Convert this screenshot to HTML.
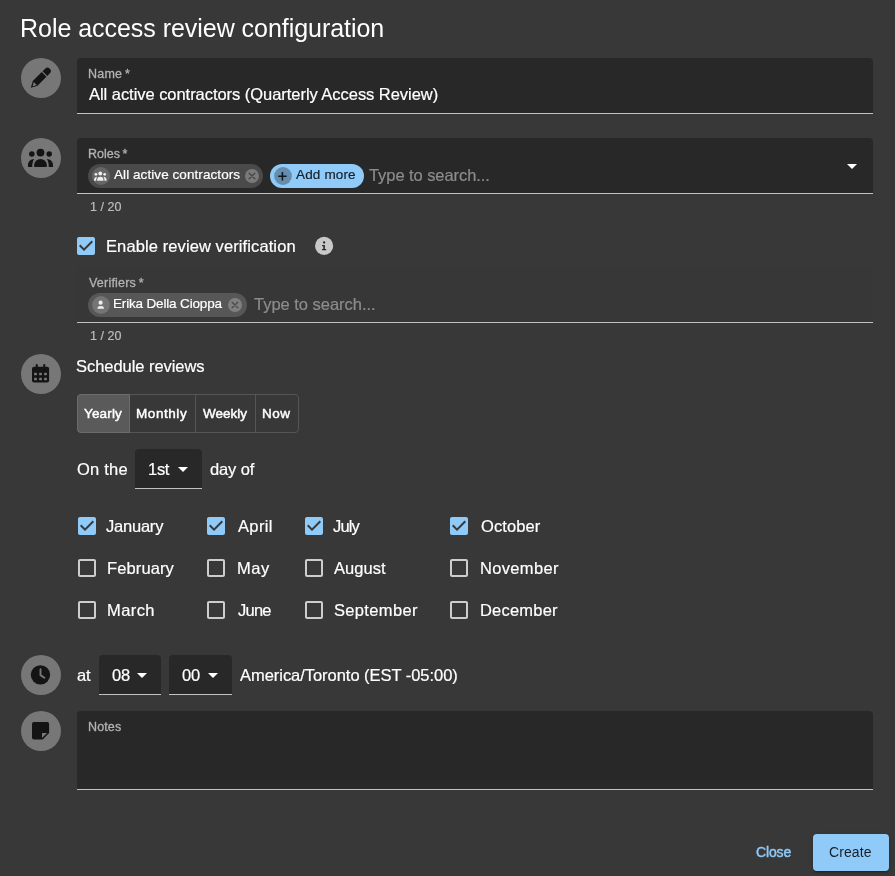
<!DOCTYPE html>
<html><head><meta charset="utf-8">
<title>Role access review configuration</title>
<style>
*{box-sizing:border-box;margin:0;padding:0}
html,body{width:895px;height:876px;overflow:hidden;background:#383838;font-family:"Liberation Sans",sans-serif;color:#fff}
.a{position:absolute}
svg.a{overflow:visible}
.t{position:absolute;white-space:nowrap;line-height:0;height:0;will-change:transform}
.circ{position:absolute;left:21px;width:40px;height:40px;border-radius:50%;background:#777}
.fld{position:absolute;left:77px;width:796px;background:#282828;border-radius:4px 4px 0 0;border-bottom:1px solid #c2c2c2}
</style></head><body>

<!-- name -->
<div class="circ" style="top:58px"></div>
<svg class="a" style="left:21px;top:58px" width="40" height="40" viewBox="21 58 40 40">
  <g transform="translate(30.8 87.7) rotate(-45)" fill="#141414">
    <path d="M0 0L6.1 -3.3H18.8V3.3H6.1Z"/>
    <path d="M20 -3.3H23.6A3.3 3.3 0 0 1 23.6 3.3H20Z"/>
  </g>
  <g transform="translate(30.8 87.7) rotate(-45)" fill="#777">
    <path d="M2.3 0.2L6.1 -2.1V2.4Z"/>
  </g>
</svg>
<div class="fld" style="top:58px;height:56px"></div>

<!-- roles -->
<div class="circ" style="top:138px"></div>
<svg class="a" style="left:21px;top:138px" width="40" height="40" viewBox="21 138 40 40" fill="#141414"><circle cx="40.5" cy="152.6" r="3.9"/>
      <circle cx="31.8" cy="154.1" r="2.75"/>
      <circle cx="49.2" cy="154.1" r="2.75"/>
      <path d="M34.2 167V165.2A6.3 6.3 0 0 1 46.8 165.2V167Z"/>
      <path d="M34.2 159.1C30.6 159.3 28 161.8 28 165.2V167H32.2C32.2 163.6 32.8 161 34.2 159.1Z"/>
      <path d="M46.8 159.1C50.4 159.3 53 161.8 53 165.2V167H48.8C48.8 163.6 48.2 161 46.8 159.1Z"/></svg>
<div class="fld" style="top:138px;height:56px"></div>
<div class="a" style="left:88px;top:164px;width:175px;height:24px;border-radius:12px;background:#4a4a4a"></div>
<div class="a" style="left:92px;top:167px;width:18px;height:18px;border-radius:50%;background:#666"></div>
<svg class="a" style="left:92px;top:167px" width="18" height="18" viewBox="92 167 18 18" fill="#eee"><g transform="translate(100.3 176.1) scale(0.5) translate(-40.5 -157.8)"><circle cx="40.5" cy="152.6" r="3.9"/>
      <circle cx="31.8" cy="154.1" r="2.75"/>
      <circle cx="49.2" cy="154.1" r="2.75"/>
      <path d="M34.2 167V165.2A6.3 6.3 0 0 1 46.8 165.2V167Z"/>
      <path d="M34.2 159.1C30.6 159.3 28 161.8 28 165.2V167H32.2C32.2 163.6 32.8 161 34.2 159.1Z"/>
      <path d="M46.8 159.1C50.4 159.3 53 161.8 53 165.2V167H48.8C48.8 163.6 48.2 161 46.8 159.1Z"/></g></svg>
<svg class="a" style="left:245px;top:169px" width="14" height="14" viewBox="245 169 14 14">
  <circle cx="252" cy="176" r="7" fill="#7a7a7a"/>
  <path d="M249.1 173.3L254.8 178.7M254.8 173.3L249.1 178.7" stroke="#444" stroke-width="1.3" stroke-linecap="round"/>
</svg>
<div class="a" style="left:270px;top:164px;width:94px;height:24px;border-radius:12px;background:#90caf9"></div>
<svg class="a" style="left:274px;top:167px" width="18" height="18" viewBox="274 167 18 18">
  <circle cx="283" cy="176" r="8.9" fill="#668cae"/>
  <path d="M278.2 176.2H286.6M282.4 172V180.4" stroke="#101a24" stroke-width="1.6"/>
</svg>
<svg class="a" style="left:840px;top:154px" width="24" height="24" viewBox="0 0 24 24" fill="#fff"><path d="M7 10l5 5 5-5z"/></svg>

<!-- verify -->
<svg class="a" style="left:74px;top:234px" width="24" height="24" viewBox="0 0 24 24" fill="#90caf9"><path d="M19 3H5c-1.11 0-2 .9-2 2v14c0 1.1.89 2 2 2h14c1.11 0 2-.9 2-2V5c0-1.1-.89-2-2-2zm-9 14l-5-5 1.41-1.41L10 14.17l7.59-7.59L19 8l-9 9z"/></svg>
<svg class="a" style="left:315px;top:237px" width="18" height="18" viewBox="315 237 18 18">
  <circle cx="324.1" cy="245.9" r="9.1" fill="#c8c8c8"/>
  <circle cx="324.1" cy="242.5" r="1.15" fill="#2a2a2a"/>
  <path d="M322.1 245.1H324.9V249H326.2V250.2H322V249H323.3V246.2H322.1Z" fill="#2a2a2a"/>
</svg>
<div class="a" style="left:77px;top:267px;width:796px;height:56px;border-bottom:1px solid #c2c2c2;background:#373737;border-radius:4px 4px 0 0"></div>
<div class="a" style="left:88px;top:293px;width:159px;height:24px;border-radius:12px;background:#575757"></div>
<svg class="a" style="left:92px;top:296px" width="18" height="18" viewBox="92 296 18 18">
  <circle cx="101" cy="305" r="8.9" fill="#747474"/>
  <circle cx="100.6" cy="302.7" r="2.1" fill="#eee"/>
  <path d="M97.5 308.8V308.3A3.2 2.4 0 0 1 103.9 308.3V308.8Z" fill="#eee"/>
</svg>
<svg class="a" style="left:228px;top:298px" width="14" height="14" viewBox="228 298 14 14">
  <circle cx="235" cy="305" r="7" fill="#808080"/>
  <path d="M232.1 302.3L237.8 307.7M237.8 302.3L232.1 307.7" stroke="#4a4a4a" stroke-width="1.3" stroke-linecap="round"/>
</svg>

<!-- schedule -->
<div class="circ" style="top:354px"></div>
<svg class="a" style="left:21px;top:354px" width="40" height="40" viewBox="21 354 40 40" fill="#141414">
  <rect x="32" y="366.8" width="17.1" height="15.8" rx="2"/>
  <rect x="35.7" y="363.9" width="2.1" height="5" rx="1"/>
  <rect x="43.2" y="363.9" width="2.1" height="5" rx="1"/>
  <g fill="#777">
    <rect x="34.1" y="372.8" width="2.8" height="2.4" rx=".4"/>
    <rect x="39.1" y="372.8" width="2.8" height="2.4" rx=".4"/>
    <rect x="44.1" y="372.8" width="2.8" height="2.4" rx=".4"/>
    <rect x="34.1" y="377.8" width="2.8" height="2.4" rx=".4"/>
    <rect x="39.1" y="377.8" width="2.8" height="2.4" rx=".4"/>
    <rect x="44.1" y="377.8" width="2.8" height="2.4" rx=".4"/>
  </g>
</svg>
<div class="a" style="left:77px;top:394px;width:222px;height:39px;border:1px solid #555;border-radius:4px"></div>
<div class="a" style="left:195px;top:395px;width:1px;height:37px;background:#555"></div>
<div class="a" style="left:255px;top:395px;width:1px;height:37px;background:#555"></div>
<div class="a" style="left:77px;top:394px;width:53px;height:39px;border:1px solid #6c6c6c;border-radius:4px 0 0 4px;background:#5a5a5a"></div>

<div class="fld" style="left:135px;top:449px;width:67px;height:40px"></div>
<svg class="a" style="left:171px;top:457px" width="24" height="24" viewBox="0 0 24 24" fill="#fff"><path d="M7 10l5 5 5-5z"/></svg>

<!-- months -->
<svg class="a" style="left:75px;top:514px" width="24" height="24" viewBox="0 0 24 24" fill="#90caf9"><path d="M19 3H5c-1.11 0-2 .9-2 2v14c0 1.1.89 2 2 2h14c1.11 0 2-.9 2-2V5c0-1.1-.89-2-2-2zm-9 14l-5-5 1.41-1.41L10 14.17l7.59-7.59L19 8l-9 9z"/></svg>
<svg class="a" style="left:204px;top:514px" width="24" height="24" viewBox="0 0 24 24" fill="#90caf9"><path d="M19 3H5c-1.11 0-2 .9-2 2v14c0 1.1.89 2 2 2h14c1.11 0 2-.9 2-2V5c0-1.1-.89-2-2-2zm-9 14l-5-5 1.41-1.41L10 14.17l7.59-7.59L19 8l-9 9z"/></svg>
<svg class="a" style="left:302px;top:514px" width="24" height="24" viewBox="0 0 24 24" fill="#90caf9"><path d="M19 3H5c-1.11 0-2 .9-2 2v14c0 1.1.89 2 2 2h14c1.11 0 2-.9 2-2V5c0-1.1-.89-2-2-2zm-9 14l-5-5 1.41-1.41L10 14.17l7.59-7.59L19 8l-9 9z"/></svg>
<svg class="a" style="left:447px;top:514px" width="24" height="24" viewBox="0 0 24 24" fill="#90caf9"><path d="M19 3H5c-1.11 0-2 .9-2 2v14c0 1.1.89 2 2 2h14c1.11 0 2-.9 2-2V5c0-1.1-.89-2-2-2zm-9 14l-5-5 1.41-1.41L10 14.17l7.59-7.59L19 8l-9 9z"/></svg>

<svg class="a" style="left:75px;top:556px" width="24" height="24" viewBox="0 0 24 24" fill="#cdcdcd"><path d="M19 5v14H5V5h14m0-2H5c-1.1 0-2 .9-2 2v14c0 1.1.9 2 2 2h14c1.1 0 2-.9 2-2V5c0-1.1-.9-2-2-2z"/></svg>
<svg class="a" style="left:204px;top:556px" width="24" height="24" viewBox="0 0 24 24" fill="#cdcdcd"><path d="M19 5v14H5V5h14m0-2H5c-1.1 0-2 .9-2 2v14c0 1.1.9 2 2 2h14c1.1 0 2-.9 2-2V5c0-1.1-.9-2-2-2z"/></svg>
<svg class="a" style="left:302px;top:556px" width="24" height="24" viewBox="0 0 24 24" fill="#cdcdcd"><path d="M19 5v14H5V5h14m0-2H5c-1.1 0-2 .9-2 2v14c0 1.1.9 2 2 2h14c1.1 0 2-.9 2-2V5c0-1.1-.9-2-2-2z"/></svg>
<svg class="a" style="left:447px;top:556px" width="24" height="24" viewBox="0 0 24 24" fill="#cdcdcd"><path d="M19 5v14H5V5h14m0-2H5c-1.1 0-2 .9-2 2v14c0 1.1.9 2 2 2h14c1.1 0 2-.9 2-2V5c0-1.1-.9-2-2-2z"/></svg>

<svg class="a" style="left:75px;top:598px" width="24" height="24" viewBox="0 0 24 24" fill="#cdcdcd"><path d="M19 5v14H5V5h14m0-2H5c-1.1 0-2 .9-2 2v14c0 1.1.9 2 2 2h14c1.1 0 2-.9 2-2V5c0-1.1-.9-2-2-2z"/></svg>
<svg class="a" style="left:204px;top:598px" width="24" height="24" viewBox="0 0 24 24" fill="#cdcdcd"><path d="M19 5v14H5V5h14m0-2H5c-1.1 0-2 .9-2 2v14c0 1.1.9 2 2 2h14c1.1 0 2-.9 2-2V5c0-1.1-.9-2-2-2z"/></svg>
<svg class="a" style="left:302px;top:598px" width="24" height="24" viewBox="0 0 24 24" fill="#cdcdcd"><path d="M19 5v14H5V5h14m0-2H5c-1.1 0-2 .9-2 2v14c0 1.1.9 2 2 2h14c1.1 0 2-.9 2-2V5c0-1.1-.9-2-2-2z"/></svg>
<svg class="a" style="left:447px;top:598px" width="24" height="24" viewBox="0 0 24 24" fill="#cdcdcd"><path d="M19 5v14H5V5h14m0-2H5c-1.1 0-2 .9-2 2v14c0 1.1.9 2 2 2h14c1.1 0 2-.9 2-2V5c0-1.1-.9-2-2-2z"/></svg>

<!-- time -->
<div class="circ" style="top:655px"></div>
<svg class="a" style="left:21px;top:655px" width="40" height="40" viewBox="21 655 40 40">
  <circle cx="40.45" cy="674.85" r="9.7" fill="#141414"/>
  <path d="M40.5 669.3V675.1L44.4 677.7" fill="none" stroke="#777" stroke-width="1.9" stroke-linecap="round" stroke-linejoin="round"/>
</svg>
<div class="fld" style="left:99px;top:655px;width:62px;height:40px"></div>
<svg class="a" style="left:130px;top:663px" width="24" height="24" viewBox="0 0 24 24" fill="#fff"><path d="M7 10l5 5 5-5z"/></svg>
<div class="fld" style="left:169px;top:655px;width:63px;height:40px"></div>
<svg class="a" style="left:201px;top:663px" width="24" height="24" viewBox="0 0 24 24" fill="#fff"><path d="M7 10l5 5 5-5z"/></svg>

<!-- notes -->
<div class="circ" style="top:711px"></div>
<svg class="a" style="left:21px;top:711px" width="40" height="40" viewBox="21 711 40 40">
  <path d="M34 722H47.1A2 2 0 0 1 49.1 724V733.1L42.8 739.5H34A2 2 0 0 1 32 737.5V724A2 2 0 0 1 34 722Z" fill="#141414"/>
  <path d="M42 733H47.1L42 738.1Z" fill="#777"/>
</svg>
<div class="fld" style="top:711px;height:79px"></div>

<!-- footer -->
<div class="a" style="left:813px;top:834px;width:76px;height:37px;border-radius:4px;background:#90caf9;box-shadow:0 3px 1px -2px rgba(0,0,0,.2),0 2px 2px 0 rgba(0,0,0,.14),0 1px 5px 0 rgba(0,0,0,.12)"></div>
<div class="t" id="title" style="left:19.80px;top:28.34px;font-size:25px;color:#fff;font-weight:402;letter-spacing:-0.039px">Role access review configuration</div>
<div class="t" id="lname" style="left:88.00px;top:73.67px;font-size:12.5px;color:#b3b3b3;-webkit-text-stroke:0.3px #b3b3b3;letter-spacing:0.220px">Name *</div>
<div class="t" id="vname" style="left:89.00px;top:94.28px;font-size:16.5px;color:#fff;-webkit-text-stroke:0.2px #fff;letter-spacing:-0.043px">All active contractors (Quarterly Access Review)</div>
<div class="t" id="lroles" style="left:88.20px;top:153.67px;font-size:12.5px;color:#b3b3b3;-webkit-text-stroke:0.3px #b3b3b3">Roles *</div>
<div class="t" id="chip1" style="left:114.20px;top:175.32px;font-size:13.5px;color:#fff;-webkit-text-stroke:0.2px #fff;letter-spacing:0.071px">All active contractors</div>
<div class="t" id="addmore" style="left:296.00px;top:175.32px;font-size:13.5px;color:#15202a;-webkit-text-stroke:0.2px #15202a;letter-spacing:0.157px">Add more</div>
<div class="t" id="ph1" style="left:368.80px;top:174.78px;font-size:16.5px;color:#8c8c8c;-webkit-text-stroke:0.2px #8c8c8c;letter-spacing:-0.069px">Type to search...</div>
<div class="t" id="h1" style="left:89.60px;top:206.67px;font-size:12.5px;color:#bdbdbd;-webkit-text-stroke:0.2px #bdbdbd;letter-spacing:0.060px">1 / 20</div>
<div class="t" id="enable" style="left:106.00px;top:246.28px;font-size:16.5px;color:#fff;-webkit-text-stroke:0.2px #fff;letter-spacing:0.100px">Enable review verification</div>
<div class="t" id="lver" style="left:89.00px;top:282.67px;font-size:12.5px;color:#b3b3b3;-webkit-text-stroke:0.3px #b3b3b3;letter-spacing:0.210px">Verifiers *</div>
<div class="t" id="chip2" style="left:113.00px;top:304.32px;font-size:13.5px;color:#fff;-webkit-text-stroke:0.2px #fff;letter-spacing:-0.165px">Erika Della Cioppa</div>
<div class="t" id="ph2" style="left:254.40px;top:303.78px;font-size:16.5px;color:#8c8c8c;-webkit-text-stroke:0.2px #8c8c8c;letter-spacing:-0.019px">Type to search...</div>
<div class="t" id="h2" style="left:89.60px;top:335.67px;font-size:12.5px;color:#bdbdbd;-webkit-text-stroke:0.2px #bdbdbd;letter-spacing:0.060px">1 / 20</div>
<div class="t" id="sched" style="left:75.60px;top:366.28px;font-size:16.5px;color:#fff;-webkit-text-stroke:0.2px #fff;letter-spacing:-0.047px">Schedule reviews</div>
<div class="t" id="yearly" style="left:84.40px;top:414.32px;font-size:13.5px;color:#fff;-webkit-text-stroke:0.45px #fff;letter-spacing:0.160px">Yearly</div>
<div class="t" id="monthly" style="left:136.40px;top:414.32px;font-size:13.5px;color:#fff;-webkit-text-stroke:0.45px #fff;letter-spacing:0.567px">Monthly</div>
<div class="t" id="weekly" style="left:203.00px;top:414.32px;font-size:13.5px;color:#fff;-webkit-text-stroke:0.45px #fff">Weekly</div>
<div class="t" id="now" style="left:262.00px;top:414.32px;font-size:13.5px;color:#fff;-webkit-text-stroke:0.45px #fff;letter-spacing:0.450px">Now</div>
<div class="t" id="onthe" style="left:76.60px;top:469.28px;font-size:16.5px;color:#fff;-webkit-text-stroke:0.2px #fff;letter-spacing:0.220px">On the</div>
<div class="t" id="first" style="left:147.60px;top:469.28px;font-size:16.5px;color:#fff;-webkit-text-stroke:0.2px #fff;letter-spacing:-0.300px">1st</div>
<div class="t" id="dayof" style="left:210.40px;top:469.28px;font-size:16.5px;color:#fff;-webkit-text-stroke:0.2px #fff;letter-spacing:-0.120px">day of</div>
<div class="t" id="jan" style="left:106.40px;top:526.28px;font-size:16.5px;color:#fff;-webkit-text-stroke:0.2px #fff;letter-spacing:-0.217px">January</div>
<div class="t" id="apr" style="left:237.60px;top:526.28px;font-size:16.5px;color:#fff;-webkit-text-stroke:0.2px #fff;letter-spacing:0.350px">April</div>
<div class="t" id="jul" style="left:333.40px;top:526.28px;font-size:16.5px;color:#fff;-webkit-text-stroke:0.2px #fff;letter-spacing:-0.867px">July</div>
<div class="t" id="oct" style="left:480.60px;top:526.28px;font-size:16.5px;color:#fff;-webkit-text-stroke:0.2px #fff;letter-spacing:0.100px">October</div>
<div class="t" id="feb" style="left:106.80px;top:568.28px;font-size:16.5px;color:#fff;-webkit-text-stroke:0.2px #fff;letter-spacing:0.114px">February</div>
<div class="t" id="may" style="left:236.80px;top:568.28px;font-size:16.5px;color:#fff;-webkit-text-stroke:0.2px #fff;letter-spacing:0.550px">May</div>
<div class="t" id="aug" style="left:334.40px;top:568.28px;font-size:16.5px;color:#fff;-webkit-text-stroke:0.2px #fff;letter-spacing:0.060px">August</div>
<div class="t" id="nov" style="left:479.60px;top:568.28px;font-size:16.5px;color:#fff;-webkit-text-stroke:0.2px #fff;letter-spacing:0.329px">November</div>
<div class="t" id="mar" style="left:106.80px;top:610.28px;font-size:16.5px;color:#fff;-webkit-text-stroke:0.2px #fff;letter-spacing:0.425px">March</div>
<div class="t" id="jun" style="left:237.60px;top:610.28px;font-size:16.5px;color:#fff;-webkit-text-stroke:0.2px #fff;letter-spacing:-0.767px">June</div>
<div class="t" id="sep" style="left:334.00px;top:610.28px;font-size:16.5px;color:#fff;-webkit-text-stroke:0.2px #fff;letter-spacing:0.338px">September</div>
<div class="t" id="dec" style="left:479.80px;top:610.28px;font-size:16.5px;color:#fff;-webkit-text-stroke:0.2px #fff;letter-spacing:0.200px">December</div>
<div class="t" id="at" style="left:76.80px;top:675.28px;font-size:16.5px;color:#fff;-webkit-text-stroke:0.2px #fff;letter-spacing:-0.300px">at</div>
<div class="t" id="h08" style="left:111.60px;top:675.28px;font-size:16.5px;color:#fff;-webkit-text-stroke:0.2px #fff;letter-spacing:-0.300px">08</div>
<div class="t" id="m00" style="left:181.80px;top:675.28px;font-size:16.5px;color:#fff;-webkit-text-stroke:0.2px #fff;letter-spacing:-0.300px">00</div>
<div class="t" id="tz" style="left:240.20px;top:675.28px;font-size:16.5px;color:#fff;-webkit-text-stroke:0.2px #fff;letter-spacing:-0.041px">America/Toronto (EST -05:00)</div>
<div class="t" id="lnotes" style="left:88.20px;top:726.67px;font-size:12.5px;color:#b3b3b3;-webkit-text-stroke:0.3px #b3b3b3;letter-spacing:0.125px">Notes</div>
<div class="t" id="close" style="left:755.60px;top:852.15px;font-size:14px;color:#90caf9;-webkit-text-stroke:0.45px #90caf9;letter-spacing:-0.150px">Close</div>
<div class="t" id="create" style="left:829.00px;top:852.15px;font-size:14px;color:#16202a;font-weight:402;letter-spacing:0.080px">Create</div>
</body></html>
